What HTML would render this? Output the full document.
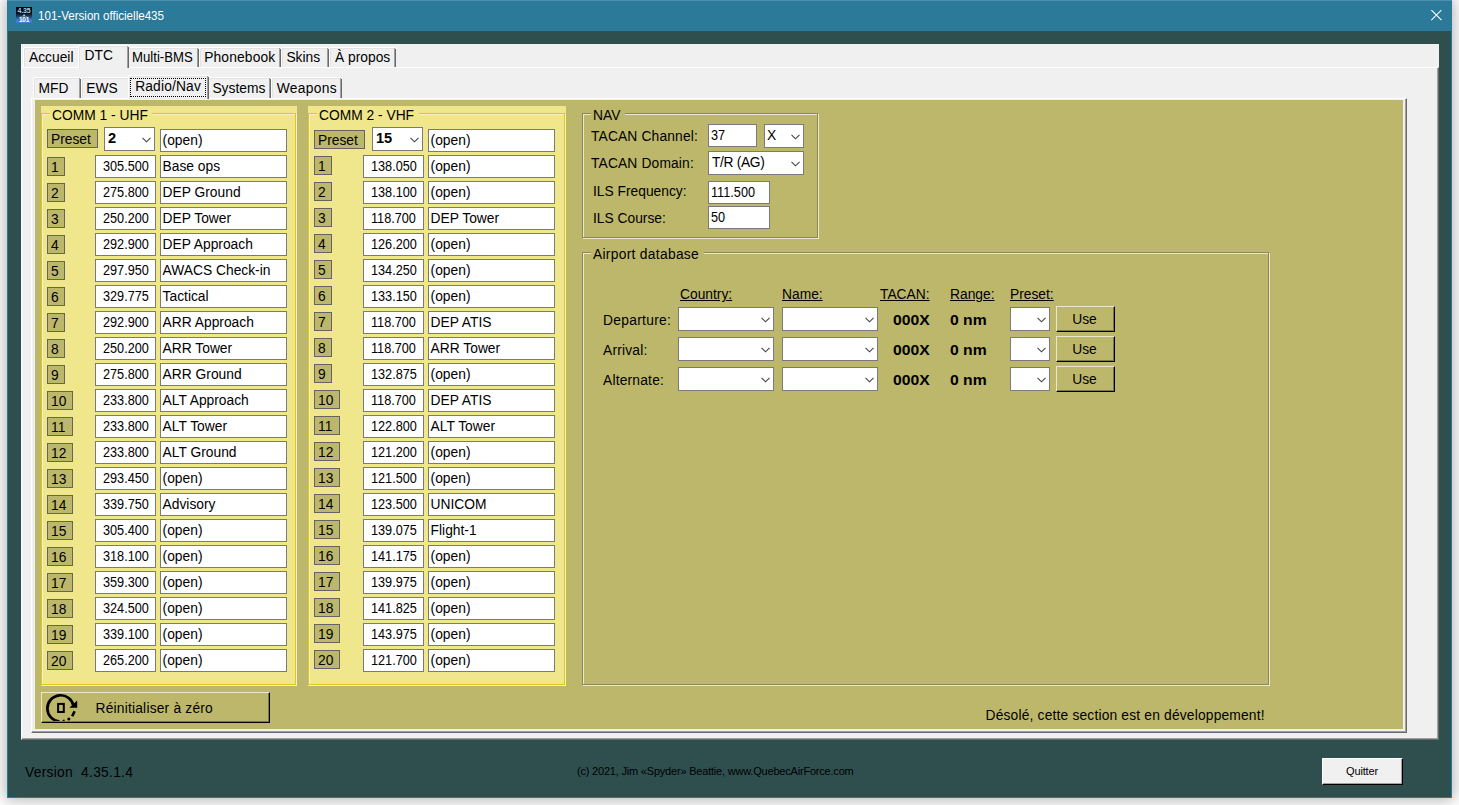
<!DOCTYPE html>
<html lang="fr"><head><meta charset="utf-8"><title>101-Version officielle435</title>
<style>
html,body{margin:0;padding:0}
body{width:1459px;height:805px;overflow:hidden;background:#fff;position:relative;font-family:"Liberation Sans",sans-serif;font-size:13.8px;color:#000}
div,span{box-sizing:border-box}
.a{position:absolute}
.win{position:absolute;left:7px;top:0;width:1445px;height:798px;background:#2f4f4f;border:1px solid #2b7a99;border-top:none;box-shadow:0 0 14px 2px rgba(0,0,0,.30)}
.titlebar{position:absolute;left:7px;top:0;width:1445px;height:31px;background:#2b7a99;border-top:1px solid #4a8fab}
.ttext{position:absolute;left:37.5px;top:9px;transform:scaleX(.965);font-size:12px;line-height:15px;color:#fff;white-space:nowrap;transform-origin:0 50%}
.ico{position:absolute;left:16px;top:7px;width:16px;height:16px;background:linear-gradient(#000 0%,#04080c 35%,#1d4468 60%,#3b83c4 80%,#3b83c4 100%);overflow:hidden}
.ico span{position:absolute;left:0;width:16px;text-align:center;font-size:6px;line-height:6px;font-weight:bold;letter-spacing:-.3px}
/* tab controls */
.tc{position:absolute;background:#f0f0f0}
.tab{position:absolute;background:#f0f0f0;border-top:1px solid #fff;border-left:1px solid #fff;border-radius:2px 2px 0 0;white-space:nowrap}
.tab:after{content:"";position:absolute;right:0;top:1px;bottom:0;width:1px;background:#696969}
.tab:before{content:"";position:absolute;right:1px;top:0px;bottom:0;width:1px;background:#a0a0a0}
.tab span{position:absolute;white-space:nowrap}
.tab{box-shadow:inset 1px 1px 0 #e3e3e3}
.page{position:absolute;background:#f0f0f0;border-left:1px solid #fff;border-top:1px solid #fff;border-right:1px solid #696969;border-bottom:1px solid #696969}
.page:after{content:"";position:absolute;left:0;top:0;right:0;bottom:0;border-right:1px solid #a0a0a0;border-bottom:1px solid #a0a0a0}
.khaki{position:absolute;left:35px;top:100px;width:1368px;height:629px;background:#bdb76b}
/* group boxes */
.gb{position:absolute}
.ygb{background:#f0e68c}
.gbline{position:absolute;left:0;top:7px;right:1px;bottom:1px;border:1px solid #dfc81a;box-shadow:inset 1px 1px 0 #f7f0c0, 1px 1px 0 #f7f0c0}
.kgb .gbline{border-color:#8e8950;box-shadow:inset 1px 1px 0 #ebe9d2, 1px 1px 0 #ebe9d2}
.gbt{position:absolute;left:9px;top:2px;padding:0 4.5px 0 2px;line-height:16px;white-space:nowrap}
.ygb .gbt{background:#f0e68c}
.kgb .gbt{background:#bdb76b}
.lbl{position:absolute;background:#bdb76b;border:1px solid #646468;padding-left:3px;line-height:20px;white-space:nowrap;overflow:hidden}
.tb{position:absolute;background:#fff;border:1px solid #7a7a7a;padding-left:2px;line-height:21px;white-space:nowrap;overflow:hidden}
.tb.c{text-align:center;padding-left:0}
.n{display:inline-block;transform:scaleX(.92);transform-origin:0 50%}
.tb.c .n{transform-origin:50% 50%}
.combo{position:absolute;background:#fff;border:1px solid #7a7a7a;white-space:nowrap;overflow:hidden}
.combo span{position:absolute;left:4px;top:0;line-height:21px}
.combo.bold span{font-weight:bold;font-size:14.6px;line-height:20px;left:3px}
.chev{position:absolute;right:3px;top:9px}
.t{position:absolute;white-space:nowrap;line-height:16px;margin-top:1px}
.u{text-decoration:underline}
.b{font-weight:bold}
.btn{position:absolute;border-top:1px solid #fff;border-left:1px solid #fff;border-right:1px solid #000;border-bottom:1px solid #000;text-align:center;white-space:nowrap}
.btn:after{content:"";position:absolute;left:0;top:0;right:0;bottom:0;border-right:1px solid #a0a0a0;border-bottom:1px solid #a0a0a0}
.kbtn:after{border-color:#7e7a47}
.bw{display:inline-block;transform:scaleX(1.14);transform-origin:0 50%}
.kbtn{background:#bdb76b;border-top-color:#e9e7cc;border-left-color:#e9e7cc}
.tb.nm{padding-left:1.6px}

</style></head>
<body>
<div class="win"></div>
<div class="titlebar"></div>
<div class="ico"><span style="top:1px;color:#a6cdf7;font-size:7px;letter-spacing:-.2px">4.35</span><svg class="a" style="left:0;top:0" width="16" height="16" viewBox="0 0 16 16"><path d="M3.5 10.5 L7 9 M12.5 10.5 L9 9" stroke="#7f97ad" stroke-width=".7" fill="none"/><rect x="7.3" y="7.6" width="1.5" height="1.8" fill="#dfe9f2"/></svg><span style="top:10px;color:#fff;font-size:6.5px">101</span></div>
<div class="ttext">101-Version officielle435</div>
<svg class="a" style="left:1431px;top:10px" width="11" height="11" viewBox="0 0 11 11"><path d="M0.3 0 L10.5 10.2 M10.5 0 L0.3 10.2" stroke="#fff" stroke-width="1.05" fill="none"/></svg>

<!-- outer tab control -->
<div class="tc" style="left:21px;top:44px;width:1418px;height:696px;border-left:1px solid #fff"></div>
<div class="page" style="left:21px;top:67px;width:1418px;height:673px"></div>
<div class="tab" style="left:23px;top:47px;width:57px;height:20px"><span style="left:5px;top:2px">Accueil</span></div>
<div class="tab" style="left:127px;top:47px;width:72px;height:20px"><span style="left:4px;top:2px;transform:scaleX(.955);transform-origin:0 50%">Multi-BMS</span></div>
<div class="tab" style="left:199px;top:47px;width:82px;height:20px"><span style="left:4.2px;top:2px;letter-spacing:.15px">Phonebook</span></div>
<div class="tab" style="left:281px;top:47px;width:48px;height:20px"><span style="left:4.4px;top:2px">Skins</span></div>
<div class="tab" style="left:329px;top:47px;width:67px;height:20px"><span style="left:5px;top:2px">À propos</span></div>
<div class="tab sel" style="left:78px;top:45px;width:51px;height:23px"><span style="left:5.5px;top:2px">DTC</span></div>

<!-- inner tab control -->
<div class="page" style="left:31px;top:98px;width:1376px;height:635px"></div>
<div class="tab" style="left:33px;top:77px;width:48px;height:21px"><span style="left:4.5px;top:3px">MFD</span></div>
<div class="tab" style="left:81px;top:77px;width:49px;height:21px"><span style="left:4.2px;top:3px">EWS</span></div>
<div class="tab" style="left:207px;top:77px;width:64px;height:21px"><span style="left:4.4px;top:3px">Systems</span></div>
<div class="tab" style="left:271px;top:77px;width:71px;height:21px"><span style="left:4.8px;top:3px;letter-spacing:.3px">Weapons</span></div>
<div class="tab sel" style="left:128px;top:75px;width:81px;height:24px"><span style="left:6.2px;top:3px;letter-spacing:.15px">Radio/Nav</span><div class="a" style="left:1px;top:2px;width:76px;height:19px;border:1px dotted #000"></div></div>
<div class="khaki"></div>

<div class="gb ygb" style="left:41px;top:106px;width:256px;height:580px">
<div class="gbline"></div><span class="gbt">COMM 1 - UHF</span>
<div class="lbl" style="left:6px;top:23px;width:51px;height:19px">Preset</div>
<div class="combo bold" style="left:63px;top:21px;width:51px;height:24px"><span>2</span><svg class="chev" width="9" height="6" viewBox="0 0 9 6"><path d="M0.5 0.8 L4.5 4.8 L8.5 0.8" fill="none" stroke="#444" stroke-width="1.1"/></svg></div>
<div class="tb nm" style="left:119px;top:23px;width:127px;height:23px">(open)</div>
<div class="lbl" style="left:6px;top:51px;width:18px;height:19px">1</div><div class="tb c" style="left:54px;top:49px;width:61px;height:23px"><span class="n">305.500</span></div><div class="tb nm" style="left:119px;top:49px;width:127px;height:23px">Base ops</div>
<div class="lbl" style="left:6px;top:77px;width:18px;height:19px">2</div><div class="tb c" style="left:54px;top:75px;width:61px;height:23px"><span class="n">275.800</span></div><div class="tb nm" style="left:119px;top:75px;width:127px;height:23px">DEP Ground</div>
<div class="lbl" style="left:6px;top:103px;width:18px;height:19px">3</div><div class="tb c" style="left:54px;top:101px;width:61px;height:23px"><span class="n">250.200</span></div><div class="tb nm" style="left:119px;top:101px;width:127px;height:23px">DEP Tower</div>
<div class="lbl" style="left:6px;top:129px;width:18px;height:19px">4</div><div class="tb c" style="left:54px;top:127px;width:61px;height:23px"><span class="n">292.900</span></div><div class="tb nm" style="left:119px;top:127px;width:127px;height:23px">DEP Approach</div>
<div class="lbl" style="left:6px;top:155px;width:18px;height:19px">5</div><div class="tb c" style="left:54px;top:153px;width:61px;height:23px"><span class="n">297.950</span></div><div class="tb nm" style="left:119px;top:153px;width:127px;height:23px">AWACS Check-in</div>
<div class="lbl" style="left:6px;top:181px;width:18px;height:19px">6</div><div class="tb c" style="left:54px;top:179px;width:61px;height:23px"><span class="n">329.775</span></div><div class="tb nm" style="left:119px;top:179px;width:127px;height:23px">Tactical</div>
<div class="lbl" style="left:6px;top:207px;width:18px;height:19px">7</div><div class="tb c" style="left:54px;top:205px;width:61px;height:23px"><span class="n">292.900</span></div><div class="tb nm" style="left:119px;top:205px;width:127px;height:23px">ARR Approach</div>
<div class="lbl" style="left:6px;top:233px;width:18px;height:19px">8</div><div class="tb c" style="left:54px;top:231px;width:61px;height:23px"><span class="n">250.200</span></div><div class="tb nm" style="left:119px;top:231px;width:127px;height:23px">ARR Tower</div>
<div class="lbl" style="left:6px;top:259px;width:18px;height:19px">9</div><div class="tb c" style="left:54px;top:257px;width:61px;height:23px"><span class="n">275.800</span></div><div class="tb nm" style="left:119px;top:257px;width:127px;height:23px">ARR Ground</div>
<div class="lbl" style="left:6px;top:285px;width:26px;height:19px">10</div><div class="tb c" style="left:54px;top:283px;width:61px;height:23px"><span class="n">233.800</span></div><div class="tb nm" style="left:119px;top:283px;width:127px;height:23px">ALT Approach</div>
<div class="lbl" style="left:6px;top:311px;width:26px;height:19px">11</div><div class="tb c" style="left:54px;top:309px;width:61px;height:23px"><span class="n">233.800</span></div><div class="tb nm" style="left:119px;top:309px;width:127px;height:23px">ALT Tower</div>
<div class="lbl" style="left:6px;top:337px;width:26px;height:19px">12</div><div class="tb c" style="left:54px;top:335px;width:61px;height:23px"><span class="n">233.800</span></div><div class="tb nm" style="left:119px;top:335px;width:127px;height:23px">ALT Ground</div>
<div class="lbl" style="left:6px;top:363px;width:26px;height:19px">13</div><div class="tb c" style="left:54px;top:361px;width:61px;height:23px"><span class="n">293.450</span></div><div class="tb nm" style="left:119px;top:361px;width:127px;height:23px">(open)</div>
<div class="lbl" style="left:6px;top:389px;width:26px;height:19px">14</div><div class="tb c" style="left:54px;top:387px;width:61px;height:23px"><span class="n">339.750</span></div><div class="tb nm" style="left:119px;top:387px;width:127px;height:23px">Advisory</div>
<div class="lbl" style="left:6px;top:415px;width:26px;height:19px">15</div><div class="tb c" style="left:54px;top:413px;width:61px;height:23px"><span class="n">305.400</span></div><div class="tb nm" style="left:119px;top:413px;width:127px;height:23px">(open)</div>
<div class="lbl" style="left:6px;top:441px;width:26px;height:19px">16</div><div class="tb c" style="left:54px;top:439px;width:61px;height:23px"><span class="n">318.100</span></div><div class="tb nm" style="left:119px;top:439px;width:127px;height:23px">(open)</div>
<div class="lbl" style="left:6px;top:467px;width:26px;height:19px">17</div><div class="tb c" style="left:54px;top:465px;width:61px;height:23px"><span class="n">359.300</span></div><div class="tb nm" style="left:119px;top:465px;width:127px;height:23px">(open)</div>
<div class="lbl" style="left:6px;top:493px;width:26px;height:19px">18</div><div class="tb c" style="left:54px;top:491px;width:61px;height:23px"><span class="n">324.500</span></div><div class="tb nm" style="left:119px;top:491px;width:127px;height:23px">(open)</div>
<div class="lbl" style="left:6px;top:519px;width:26px;height:19px">19</div><div class="tb c" style="left:54px;top:517px;width:61px;height:23px"><span class="n">339.100</span></div><div class="tb nm" style="left:119px;top:517px;width:127px;height:23px">(open)</div>
<div class="lbl" style="left:6px;top:545px;width:26px;height:19px">20</div><div class="tb c" style="left:54px;top:543px;width:61px;height:23px"><span class="n">265.200</span></div><div class="tb nm" style="left:119px;top:543px;width:127px;height:23px">(open)</div>
</div>
<div class="gb ygb" style="left:308px;top:106px;width:258px;height:580px">
<div class="gbline"></div><span class="gbt">COMM 2 - VHF</span>
<div class="lbl" style="left:6px;top:24px;width:51px;height:19px">Preset</div>
<div class="combo bold" style="left:64px;top:21px;width:51px;height:24px"><span>15</span><svg class="chev" width="9" height="6" viewBox="0 0 9 6"><path d="M0.5 0.8 L4.5 4.8 L8.5 0.8" fill="none" stroke="#444" stroke-width="1.1"/></svg></div>
<div class="tb nm" style="left:120px;top:23px;width:127px;height:23px">(open)</div>
<div class="lbl" style="left:6px;top:50px;width:18px;height:19px">1</div><div class="tb c" style="left:55px;top:49px;width:61px;height:23px"><span class="n">138.050</span></div><div class="tb nm" style="left:120px;top:49px;width:127px;height:23px">(open)</div>
<div class="lbl" style="left:6px;top:76px;width:18px;height:19px">2</div><div class="tb c" style="left:55px;top:75px;width:61px;height:23px"><span class="n">138.100</span></div><div class="tb nm" style="left:120px;top:75px;width:127px;height:23px">(open)</div>
<div class="lbl" style="left:6px;top:102px;width:18px;height:19px">3</div><div class="tb c" style="left:55px;top:101px;width:61px;height:23px"><span class="n">118.700</span></div><div class="tb nm" style="left:120px;top:101px;width:127px;height:23px">DEP Tower</div>
<div class="lbl" style="left:6px;top:128px;width:18px;height:19px">4</div><div class="tb c" style="left:55px;top:127px;width:61px;height:23px"><span class="n">126.200</span></div><div class="tb nm" style="left:120px;top:127px;width:127px;height:23px">(open)</div>
<div class="lbl" style="left:6px;top:154px;width:18px;height:19px">5</div><div class="tb c" style="left:55px;top:153px;width:61px;height:23px"><span class="n">134.250</span></div><div class="tb nm" style="left:120px;top:153px;width:127px;height:23px">(open)</div>
<div class="lbl" style="left:6px;top:180px;width:18px;height:19px">6</div><div class="tb c" style="left:55px;top:179px;width:61px;height:23px"><span class="n">133.150</span></div><div class="tb nm" style="left:120px;top:179px;width:127px;height:23px">(open)</div>
<div class="lbl" style="left:6px;top:206px;width:18px;height:19px">7</div><div class="tb c" style="left:55px;top:205px;width:61px;height:23px"><span class="n">118.700</span></div><div class="tb nm" style="left:120px;top:205px;width:127px;height:23px">DEP ATIS</div>
<div class="lbl" style="left:6px;top:232px;width:18px;height:19px">8</div><div class="tb c" style="left:55px;top:231px;width:61px;height:23px"><span class="n">118.700</span></div><div class="tb nm" style="left:120px;top:231px;width:127px;height:23px">ARR Tower</div>
<div class="lbl" style="left:6px;top:258px;width:18px;height:19px">9</div><div class="tb c" style="left:55px;top:257px;width:61px;height:23px"><span class="n">132.875</span></div><div class="tb nm" style="left:120px;top:257px;width:127px;height:23px">(open)</div>
<div class="lbl" style="left:6px;top:284px;width:26px;height:19px">10</div><div class="tb c" style="left:55px;top:283px;width:61px;height:23px"><span class="n">118.700</span></div><div class="tb nm" style="left:120px;top:283px;width:127px;height:23px">DEP ATIS</div>
<div class="lbl" style="left:6px;top:310px;width:26px;height:19px">11</div><div class="tb c" style="left:55px;top:309px;width:61px;height:23px"><span class="n">122.800</span></div><div class="tb nm" style="left:120px;top:309px;width:127px;height:23px">ALT Tower</div>
<div class="lbl" style="left:6px;top:336px;width:26px;height:19px">12</div><div class="tb c" style="left:55px;top:335px;width:61px;height:23px"><span class="n">121.200</span></div><div class="tb nm" style="left:120px;top:335px;width:127px;height:23px">(open)</div>
<div class="lbl" style="left:6px;top:362px;width:26px;height:19px">13</div><div class="tb c" style="left:55px;top:361px;width:61px;height:23px"><span class="n">121.500</span></div><div class="tb nm" style="left:120px;top:361px;width:127px;height:23px">(open)</div>
<div class="lbl" style="left:6px;top:388px;width:26px;height:19px">14</div><div class="tb c" style="left:55px;top:387px;width:61px;height:23px"><span class="n">123.500</span></div><div class="tb nm" style="left:120px;top:387px;width:127px;height:23px">UNICOM</div>
<div class="lbl" style="left:6px;top:414px;width:26px;height:19px">15</div><div class="tb c" style="left:55px;top:413px;width:61px;height:23px"><span class="n">139.075</span></div><div class="tb nm" style="left:120px;top:413px;width:127px;height:23px">Flight-1</div>
<div class="lbl" style="left:6px;top:440px;width:26px;height:19px">16</div><div class="tb c" style="left:55px;top:439px;width:61px;height:23px"><span class="n">141.175</span></div><div class="tb nm" style="left:120px;top:439px;width:127px;height:23px">(open)</div>
<div class="lbl" style="left:6px;top:466px;width:26px;height:19px">17</div><div class="tb c" style="left:55px;top:465px;width:61px;height:23px"><span class="n">139.975</span></div><div class="tb nm" style="left:120px;top:465px;width:127px;height:23px">(open)</div>
<div class="lbl" style="left:6px;top:492px;width:26px;height:19px">18</div><div class="tb c" style="left:55px;top:491px;width:61px;height:23px"><span class="n">141.825</span></div><div class="tb nm" style="left:120px;top:491px;width:127px;height:23px">(open)</div>
<div class="lbl" style="left:6px;top:518px;width:26px;height:19px">19</div><div class="tb c" style="left:55px;top:517px;width:61px;height:23px"><span class="n">143.975</span></div><div class="tb nm" style="left:120px;top:517px;width:127px;height:23px">(open)</div>
<div class="lbl" style="left:6px;top:544px;width:26px;height:19px">20</div><div class="tb c" style="left:55px;top:543px;width:61px;height:23px"><span class="n">121.700</span></div><div class="tb nm" style="left:120px;top:543px;width:127px;height:23px">(open)</div>
</div>
<!-- NAV -->
<div class="gb kgb" style="left:582px;top:106px;width:237px;height:133px">
<div class="gbline"></div><span class="gbt">NAV</span>
<span class="t" style="left:9px;top:22px;letter-spacing:.15px">TACAN Channel:</span>
<span class="t" style="left:9px;top:49px;letter-spacing:.15px">TACAN Domain:</span>
<span class="t" style="left:11px;top:77px">ILS Frequency:</span>
<span class="t" style="left:11px;top:104px">ILS Course:</span>
<div class="tb" style="left:126px;top:18px;width:49px;height:23px"><span class="n">37</span></div>
<div class="combo" style="left:182px;top:18px;width:40px;height:24px"><span style="left:2px">X</span><svg class="chev" width="9" height="6" viewBox="0 0 9 6"><path d="M0.5 0.8 L4.5 4.8 L8.5 0.8" fill="none" stroke="#444" stroke-width="1.1"/></svg></div>
<div class="combo" style="left:126px;top:45px;width:96px;height:24px"><span style="left:3px;letter-spacing:-.35px">T/R (AG)</span><svg class="chev" width="9" height="6" viewBox="0 0 9 6"><path d="M0.5 0.8 L4.5 4.8 L8.5 0.8" fill="none" stroke="#444" stroke-width="1.1"/></svg></div>
<div class="tb" style="left:126px;top:75px;width:62px;height:23px"><span class="n">111.500</span></div>
<div class="tb" style="left:126px;top:100px;width:62px;height:23px"><span class="n">50</span></div>
</div>
<!-- Airport database -->
<div class="gb kgb" style="left:582px;top:245px;width:688px;height:441px">
<div class="gbline"></div><span class="gbt" style="letter-spacing:.3px">Airport database</span>
<span class="t u" style="left:98px;top:41px">Country:</span>
<span class="t u" style="left:200px;top:41px">Name:</span>
<span class="t u" style="left:298px;top:41px">TACAN:</span>
<span class="t u" style="left:368px;top:41px">Range:</span>
<span class="t u" style="left:428px;top:41px">Preset:</span>
<span class="t" style="left:21px;top:67px;letter-spacing:.3px">Departure:</span>
<div class="combo" style="left:96px;top:62px;width:96px;height:24px"><svg class="chev" width="9" height="6" viewBox="0 0 9 6"><path d="M0.5 0.8 L4.5 4.8 L8.5 0.8" fill="none" stroke="#444" stroke-width="1.1"/></svg></div>
<div class="combo" style="left:200px;top:62px;width:96px;height:24px"><svg class="chev" width="9" height="6" viewBox="0 0 9 6"><path d="M0.5 0.8 L4.5 4.8 L8.5 0.8" fill="none" stroke="#444" stroke-width="1.1"/></svg></div>
<span class="t b" style="left:311px;top:67px"><span class="bw">000X</span></span>
<span class="t b" style="left:368px;top:67px"><span class="bw">0 nm</span></span>
<div class="combo" style="left:428px;top:62px;width:40px;height:24px"><svg class="chev" width="9" height="6" viewBox="0 0 9 6"><path d="M0.5 0.8 L4.5 4.8 L8.5 0.8" fill="none" stroke="#444" stroke-width="1.1"/></svg></div>
<div class="btn kbtn" style="left:474px;top:61px;width:59px;height:26px;line-height:26px;text-indent:-2px">Use</div>
<span class="t" style="left:21px;top:97px;letter-spacing:.2px">Arrival:</span>
<div class="combo" style="left:96px;top:92px;width:96px;height:24px"><svg class="chev" width="9" height="6" viewBox="0 0 9 6"><path d="M0.5 0.8 L4.5 4.8 L8.5 0.8" fill="none" stroke="#444" stroke-width="1.1"/></svg></div>
<div class="combo" style="left:200px;top:92px;width:96px;height:24px"><svg class="chev" width="9" height="6" viewBox="0 0 9 6"><path d="M0.5 0.8 L4.5 4.8 L8.5 0.8" fill="none" stroke="#444" stroke-width="1.1"/></svg></div>
<span class="t b" style="left:311px;top:97px"><span class="bw">000X</span></span>
<span class="t b" style="left:368px;top:97px"><span class="bw">0 nm</span></span>
<div class="combo" style="left:428px;top:92px;width:40px;height:24px"><svg class="chev" width="9" height="6" viewBox="0 0 9 6"><path d="M0.5 0.8 L4.5 4.8 L8.5 0.8" fill="none" stroke="#444" stroke-width="1.1"/></svg></div>
<div class="btn kbtn" style="left:474px;top:91px;width:59px;height:26px;line-height:26px;text-indent:-2px">Use</div>
<span class="t" style="left:21px;top:127px;letter-spacing:.2px">Alternate:</span>
<div class="combo" style="left:96px;top:122px;width:96px;height:24px"><svg class="chev" width="9" height="6" viewBox="0 0 9 6"><path d="M0.5 0.8 L4.5 4.8 L8.5 0.8" fill="none" stroke="#444" stroke-width="1.1"/></svg></div>
<div class="combo" style="left:200px;top:122px;width:96px;height:24px"><svg class="chev" width="9" height="6" viewBox="0 0 9 6"><path d="M0.5 0.8 L4.5 4.8 L8.5 0.8" fill="none" stroke="#444" stroke-width="1.1"/></svg></div>
<span class="t b" style="left:311px;top:127px"><span class="bw">000X</span></span>
<span class="t b" style="left:368px;top:127px"><span class="bw">0 nm</span></span>
<div class="combo" style="left:428px;top:122px;width:40px;height:24px"><svg class="chev" width="9" height="6" viewBox="0 0 9 6"><path d="M0.5 0.8 L4.5 4.8 L8.5 0.8" fill="none" stroke="#444" stroke-width="1.1"/></svg></div>
<div class="btn kbtn" style="left:474px;top:121px;width:59px;height:26px;line-height:26px;text-indent:-2px">Use</div>
</div>
<span class="t" style="left:985.5px;top:707px;letter-spacing:.18px">Désolé, cette section est en développement!</span>
<span class="t" style="left:25px;top:764px;letter-spacing:.27px">Version&nbsp; 4.35.1.4</span>
<span class="t" style="left:577px;top:764px;font-size:11px;line-height:13px;letter-spacing:-.2px">(c) 2021, Jim «Spyder» Beattie, www.QuebecAirForce.com</span>
<div class="btn" style="left:1322px;top:758px;width:81px;height:27px;background:#f0f0f0;font-size:11px;line-height:25px;letter-spacing:-.15px;text-indent:-1px">Quitter</div>
<!-- reset button -->
<div class="btn kbtn" style="left:41px;top:692px;width:229px;height:31px;overflow:hidden;text-align:left">
<svg class="a" style="left:2px;top:-1px" width="36" height="32" viewBox="44 692 36 32">
<path d="M59.5 721.6 A13.2 13.2 0 1 1 73.6 706.2" fill="none" stroke="#000" stroke-width="2.7"/>
<path d="M77.2 700.6 L77.2 707.7 L69.4 707.7 Z" fill="#000"/>
<path d="M74.6 711.2 L72.2 716.2" stroke="#000" stroke-width="2.6" fill="none"/>
<circle cx="68.8" cy="719" r="1.5" fill="#000"/>
<path d="M62.7 720.8 L64.6 720.4" stroke="#000" stroke-width="1.6" fill="none"/>
<rect x="58.1" y="703.9" width="5.7" height="8.1" fill="none" stroke="#000" stroke-width="2"/>
</svg>
<span class="t" style="left:53.5px;top:7px;letter-spacing:.2px">Réinitialiser à zéro</span>
</div>

</body></html>
